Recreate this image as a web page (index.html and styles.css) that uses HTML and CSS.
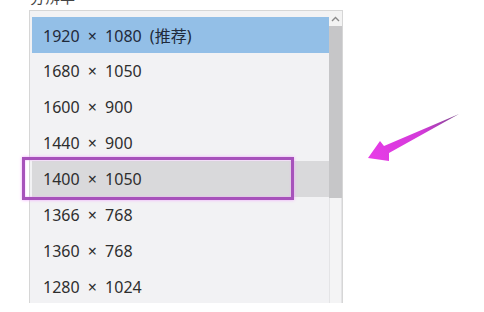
FILE: index.html
```html
<!DOCTYPE html>
<html lang="zh">
<head>
<meta charset="utf-8">
<link rel="stylesheet" href="styles.css">
</head>
<body>
<div class="label">分辨率</div>
<div class="listbox">
  <div class="list">
    <div class="row selected">1920 × 1080 (推荐)</div>
    <div class="row">1680 × 1050</div>
    <div class="row">1600 × 900</div>
    <div class="row">1440 × 900</div>
    <div class="row hover">1400 × 1050<span class="mark"></span></div>
    <div class="row">1366 × 768</div>
    <div class="row">1360 × 768</div>
    <div class="row">1280 × 1024</div>
  </div>
  <div class="scrollbar">
    <div class="btn-up"><svg width="9" height="6" viewBox="0 0 9 6"><path d="M1 5 L4.5 1.5 L8 5" fill="none" stroke="#8a8a8a" stroke-width="1.4"/></svg></div>
    <div class="thumb"></div>
    <div class="track"></div>
  </div>
</div>
<svg class="arrow" width="484" height="312" viewBox="0 0 484 312">
  <defs>
    <linearGradient id="g" x1="368" y1="158" x2="459" y2="114" gradientUnits="userSpaceOnUse">
      <stop offset="0" stop-color="#e83ce8"/>
      <stop offset="0.6" stop-color="#d23ad8"/>
      <stop offset="1" stop-color="#7a4a8a"/>
    </linearGradient>
  </defs>
  <polygon points="368,158 380,141 384,146 459,114 389,153 389,161" fill="url(#g)"/>
</svg>
</body>
</html>
```
FILE: styles.css
```css
html, body {
  margin: 0;
  padding: 0;
  background: #ffffff;
  width: 484px;
  height: 312px;
  overflow: hidden;
  font-family: "Noto Sans", "Noto Sans CJK SC", sans-serif;
}
.label {
  margin: -11px 0 0 30px;
  height: 16px;
  line-height: 16px;
  font-size: 15px;
  color: #444;
  font-family: "Noto Sans CJK SC", sans-serif;
}
.listbox {
  margin: 5px 0 0 29px;
  width: 312px;
  height: 292px;
  border: 1px solid #d6d6d6;
  border-bottom: none;
  background: #f2f2f4;
  display: flex;
  clip-path: inset(-20px -20px 0 -20px);
}
.list {
  flex: 1;
  padding: 6px 0 0 2px;
}
.row {
  position: relative;
  height: 36px;
  display: flex;
  align-items: center;
  padding-left: 11px;
  font-size: 16px;
  word-spacing: 4px;
  color: #2e2e2e;
}
.row.selected {
  background: #93bfe7;
  color: #1f2a3a;
}
.row.hover {
  background: #d9d9db;
}
.mark {
  position: absolute;
  left: -10px;
  top: -4px;
  width: 266px;
  height: 37px;
  border: 3px solid #a752bb;
  box-shadow: 0 0 3px #f2a6ff, inset 0 0 2px #f2a6ff;
}
.scrollbar {
  width: 13px;
  display: flex;
  flex-direction: column;
}
.btn-up {
  height: 15px;
  background: #f3f3f3;
  display: flex;
  align-items: center;
  justify-content: center;
}
.thumb {
  height: 172px;
  background: #c6c6c8;
}
.track {
  flex: 1;
  background: #f4f4f5;
  border-left: 1px solid #e4e4e6;
  border-right: 1px solid #e4e4e6;
}
.arrow {
  position: absolute;
  left: 0;
  top: 0;
}
```
